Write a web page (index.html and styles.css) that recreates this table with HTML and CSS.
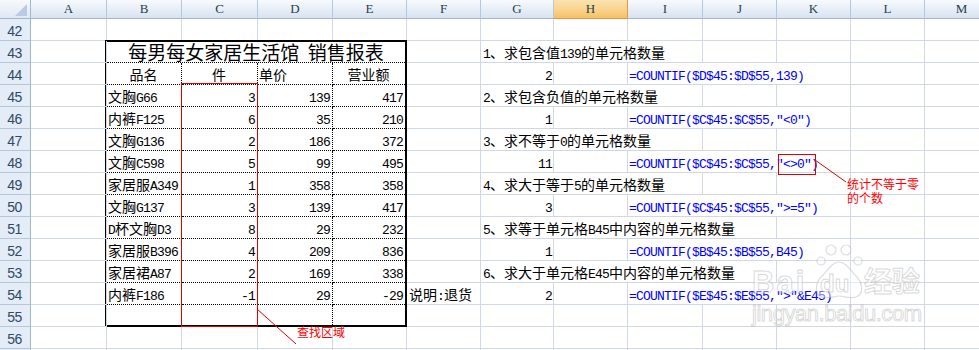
FILE: index.html
```html
<!DOCTYPE html>
<html lang="zh">
<head>
<meta charset="utf-8">
<title>销售报表</title>
<link rel="stylesheet" href="styles.css">
</head>
<body>
<div class="sheet">
  <div class="corner"></div>
  <div class="ch">A</div><div class="ch">B</div><div class="ch">C</div><div class="ch">D</div><div class="ch">E</div><div class="ch">F</div><div class="ch">G</div><div class="ch sel">H</div><div class="ch">I</div><div class="ch">J</div><div class="ch">K</div><div class="ch">L</div><div class="ch">M</div>

  <!-- row 42 -->
  <div class="rh">42</div>
  <div class="c"></div><div class="c"></div><div class="c"></div><div class="c"></div><div class="c"></div><div class="c"></div><div class="c"></div><div class="c"></div><div class="c"></div><div class="c"></div><div class="c"></div><div class="c"></div><div class="c"></div>

  <!-- sales table B43:E55 -->
  <div class="tbl">
    <div class="t title">每男每女家居生活馆&nbsp;&nbsp;销售报表</div>
    <div class="t mid">品名</div><div class="t mid">件</div><div class="t">单价</div><div class="t mid le">营业额</div>
    <div class="t">文胸<span class="l">G66</span></div><div class="t num"><span class="l">3</span></div><div class="t num"><span class="l">139</span></div><div class="t num le"><span class="l">417</span></div>
    <div class="t">内裤<span class="l">F125</span></div><div class="t num"><span class="l">6</span></div><div class="t num"><span class="l">35</span></div><div class="t num le"><span class="l">210</span></div>
    <div class="t">文胸<span class="l">G136</span></div><div class="t num"><span class="l">2</span></div><div class="t num"><span class="l">186</span></div><div class="t num le"><span class="l">372</span></div>
    <div class="t">文胸<span class="l">C598</span></div><div class="t num"><span class="l">5</span></div><div class="t num"><span class="l">99</span></div><div class="t num le"><span class="l">495</span></div>
    <div class="t">家居服<span class="l">A349</span></div><div class="t num"><span class="l">1</span></div><div class="t num"><span class="l">358</span></div><div class="t num le"><span class="l">358</span></div>
    <div class="t">文胸<span class="l">G137</span></div><div class="t num"><span class="l">3</span></div><div class="t num"><span class="l">139</span></div><div class="t num le"><span class="l">417</span></div>
    <div class="t"><span class="l">D</span>杯文胸<span class="l">D3</span></div><div class="t num"><span class="l">8</span></div><div class="t num"><span class="l">29</span></div><div class="t num le"><span class="l">232</span></div>
    <div class="t">家居服<span class="l">B396</span></div><div class="t num"><span class="l">4</span></div><div class="t num"><span class="l">209</span></div><div class="t num le"><span class="l">836</span></div>
    <div class="t">家居裙<span class="l">A87</span></div><div class="t num"><span class="l">2</span></div><div class="t num"><span class="l">169</span></div><div class="t num le"><span class="l">338</span></div>
    <div class="t">内裤<span class="l">F186</span></div><div class="t num"><span class="l">-1</span></div><div class="t num"><span class="l">29</span></div><div class="t num le"><span class="l">-29</span></div>
    <div class="t lr"></div><div class="t lr"></div><div class="t lr"></div><div class="t lr le"></div>
  </div>

  <!-- row 43 -->
  <div class="rh">43</div>
  <div class="c"></div>
  <div class="c"></div>
  <div class="c s3"><span class="l">1</span>、求包含值<span class="l">139</span>的单元格数量</div>
  <div class="c"></div><div class="c"></div><div class="c"></div><div class="c"></div>

  <!-- row 44 -->
  <div class="rh">44</div>
  <div class="c"></div>
  <div class="c"></div>
  <div class="c num"><span class="l">2</span></div>
  <div class="c"></div>
  <div class="c s3 fx"><span class="l">=COUNTIF($D$45:$D$55,139)</span></div>
  <div class="c"></div><div class="c"></div>

  <!-- row 45 -->
  <div class="rh">45</div>
  <div class="c"></div>
  <div class="c"></div>
  <div class="c s3"><span class="l">2</span>、求包含负值的单元格数量</div>
  <div class="c"></div><div class="c"></div><div class="c"></div><div class="c"></div>

  <!-- row 46 -->
  <div class="rh">46</div>
  <div class="c"></div>
  <div class="c"></div>
  <div class="c num"><span class="l">1</span></div>
  <div class="c"></div>
  <div class="c s3 fx"><span class="l">=COUNTIF($C$45:$C$55,&quot;&lt;0&quot;)</span></div>
  <div class="c"></div><div class="c"></div>

  <!-- row 47 -->
  <div class="rh">47</div>
  <div class="c"></div>
  <div class="c"></div>
  <div class="c s3"><span class="l">3</span>、求不等于<span class="l">0</span>的单元格数量</div>
  <div class="c"></div><div class="c"></div><div class="c"></div><div class="c"></div>

  <!-- row 48 -->
  <div class="rh">48</div>
  <div class="c"></div>
  <div class="c"></div>
  <div class="c num"><span class="l">11</span></div>
  <div class="c"></div>
  <div class="c s3 fx"><span class="l">=COUNTIF($C$45:$C$55,&quot;&lt;&gt;0&quot;)</span></div>
  <div class="c"></div><div class="c"></div>

  <!-- row 49 -->
  <div class="rh">49</div>
  <div class="c"></div>
  <div class="c"></div>
  <div class="c s3"><span class="l">4</span>、求大于等于<span class="l">5</span>的单元格数量</div>
  <div class="c"></div><div class="c"></div><div class="c"></div><div class="c"></div>

  <!-- row 50 -->
  <div class="rh">50</div>
  <div class="c"></div>
  <div class="c"></div>
  <div class="c num"><span class="l">3</span></div>
  <div class="c"></div>
  <div class="c s3 fx"><span class="l">=COUNTIF($C$45:$C$55,&quot;&gt;=5&quot;)</span></div>
  <div class="c"></div><div class="c"></div>

  <!-- row 51 -->
  <div class="rh">51</div>
  <div class="c"></div>
  <div class="c"></div>
  <div class="c s4"><span class="l">5</span>、求等于单元格<span class="l">B45</span>中内容的单元格数量</div>
  <div class="c"></div><div class="c"></div><div class="c"></div>

  <!-- row 52 -->
  <div class="rh">52</div>
  <div class="c"></div>
  <div class="c"></div>
  <div class="c num"><span class="l">1</span></div>
  <div class="c"></div>
  <div class="c s3 fx"><span class="l">=COUNTIF($B$45:$B$55,B45)</span></div>
  <div class="c"></div><div class="c"></div>

  <!-- row 53 -->
  <div class="rh">53</div>
  <div class="c"></div>
  <div class="c"></div>
  <div class="c s4"><span class="l">6</span>、求大于单元格<span class="l">E45</span>中内容的单元格数量</div>
  <div class="c"></div><div class="c"></div><div class="c"></div>

  <!-- row 54 -->
  <div class="rh">54</div>
  <div class="c"></div>
  <div class="c">说明<span class="l">:</span>退货</div>
  <div class="c num"><span class="l">2</span></div>
  <div class="c"></div>
  <div class="c s3 fx"><span class="l">=COUNTIF($E$45:$E$55,&quot;&gt;&quot;&amp;E45)</span></div>
  <div class="c"></div><div class="c"></div>

  <!-- row 55 -->
  <div class="rh">55</div>
  <div class="c"></div>
  <div class="c"></div><div class="c"></div><div class="c"></div><div class="c"></div><div class="c"></div><div class="c"></div><div class="c"></div><div class="c"></div>

  <!-- row 56 -->
  <div class="rh">56</div>
  <div class="c"></div><div class="c"></div><div class="c"></div><div class="c"></div><div class="c"></div><div class="c"></div><div class="c"></div><div class="c"></div><div class="c"></div><div class="c"></div><div class="c"></div><div class="c"></div><div class="c"></div>

  <!-- row 57 (only its top edge is in view) -->
  <div class="rh"></div>
  <div class="c"></div><div class="c"></div><div class="c"></div><div class="c"></div><div class="c"></div><div class="c"></div><div class="c"></div><div class="c"></div><div class="c"></div><div class="c"></div><div class="c"></div><div class="c"></div><div class="c"></div>

  <!-- drawn annotations over the sheet -->
  <svg class="overlay" width="979" height="350" viewBox="0 0 979 350">
    <rect class="redbox" x="181.5" y="83.5" width="76" height="243"/>
    <line class="redline" x1="257" y1="309" x2="296" y2="344"/>
    <rect class="redbox" x="778.5" y="154.5" width="37" height="20"/>
    <line class="redline" x1="815" y1="160" x2="846" y2="182"/>
    <g class="wm">
      <circle cx="821" cy="261" r="4"/>
      <circle cx="831" cy="250" r="5"/>
      <circle cx="846" cy="250" r="5"/>
      <circle cx="858" cy="261" r="4"/>
      <path d="M839 262 C832 262 828 270 822 276 C816 282 814 292 820 296 C826 300 834 296 839 296 C844 296 852 300 858 296 C864 292 862 282 856 276 C850 270 846 262 839 262 Z"/>
      <text class="wm-en" x="752" y="293">Bai</text>
      <text class="wm-du" x="820" y="292">du</text>
      <text class="wm-cn" x="864" y="292">经验</text>
      <text class="wm-url" x="752" y="321" textLength="170">jingyan.baidu.com</text>
    </g>
  </svg>
  <div class="note note-a">查找区域</div>
  <div class="note note-b">统计不等于零<br>的个数</div>
</div>
</body>
</html>
```
FILE: styles.css
```css
html, body {
  margin: 0;
  padding: 0;
  background: #fff;
  overflow: hidden;
}

.sheet {
  position: relative;
  width: 979px;
  height: 350px;
  overflow: hidden;
  display: grid;
  grid-template-columns: 31px 76px 75px 76px 75px 74px 74px 73px 74px 75px 74px 74px 74px 74px;
  grid-template-rows: 19px repeat(16, 22px);
  font-family: "Noto Sans CJK SC", sans-serif;
  font-size: 14px;
  color: #000;
}

/* headers */
.corner {
  background: linear-gradient(#f6f9fd, #dfe8f4);
  border-right: 1px solid #9eb6ce;
  border-bottom: 1px solid #9eb6ce;
  box-sizing: border-box;
  display: flex;
  justify-content: flex-end;
  align-items: flex-end;
  padding: 0 3px 2px 0;
}
.corner::after {
  content: "";
  width: 0;
  height: 0;
  border-left: 12px solid transparent;
  border-bottom: 12px solid #b9cbe0;
}

.ch {
  background: linear-gradient(#f8fafd 0%, #e6edf7 55%, #d8e3f0 100%);
  border-right: 1px solid #b5c7db;
  border-bottom: 1px solid #9eb6ce;
  box-sizing: border-box;
  display: flex;
  justify-content: center;
  align-items: flex-end;
  padding-bottom: 2px;
  font-family: "Liberation Serif", serif;
  font-size: 13px;
  line-height: 14px;
  color: #27404a;
}
.ch.sel {
  background: linear-gradient(#fbe2b0 0%, #f8d38e 55%, #f3c164 100%);
  border-right-color: #f29536;
  border-bottom-color: #f29536;
}

.rh {
  background: #e4ecf7;
  border-right: 1px solid #9eb6ce;
  border-bottom: 1px solid #b5c7db;
  box-sizing: border-box;
  display: flex;
  justify-content: center;
  align-items: flex-end;
  padding: 0 1px 2px 0;
  font-family: "Liberation Sans", sans-serif;
  font-size: 14px;
  letter-spacing: -0.5px;
  line-height: 14px;
  color: #2f4a66;
}

/* cells: text sits at the bottom of the cell, as in a spreadsheet */
.c {
  border-right: 1px solid #d0d7e5;
  border-bottom: 1px solid #d0d7e5;
  box-sizing: border-box;
  padding: 3px 2px 0 2px;
  line-height: 16px;
  white-space: nowrap;
  overflow: hidden;
  min-width: 0;
}
.c.num { text-align: right; padding-right: 1px; }
.c.fx { color: #0000ff; padding-left: 1px; }
.s3 { grid-column: span 3; }
.s4 { grid-column: span 4; }

.l {
  font-family: "Liberation Mono", monospace;
  font-size: 13px;
  letter-spacing: -0.8px;
}

/* sales table */
.tbl {
  grid-row: 3 / 16;
  grid-column: 3 / 7;
  margin: -1px 0 0 -2px;
  border: 2px solid #000;
  box-sizing: border-box;
  background: #fff;
  display: grid;
  grid-template-columns: 75px 76px 75px 72px;
  grid-template-rows: 21px repeat(11, 22px) 20px;
}
.t {
  border-right: 1px dotted #000;
  border-bottom: 1px dotted #000;
  box-sizing: border-box;
  padding: 3px 2px 0 1px;
  line-height: 16px;
  white-space: nowrap;
  overflow: hidden;
  min-width: 0;
}
.t.title {
  grid-column: 1 / -1;
  border-right: none;
  text-align: center;
  font-size: 19px;
  line-height: 20px;
  padding: 0;
  overflow: visible;
}
.t.mid { text-align: center; }
.t.num { text-align: right; }
.t.le { border-right: none; }
.t.lr { border-bottom: none; }

/* annotations */
.overlay {
  position: absolute;
  left: 0;
  top: 0;
  pointer-events: none;
}
.redbox {
  fill: none;
  stroke: #e00000;
  stroke-width: 1;
  shape-rendering: crispEdges;
}
.redline {
  stroke: #e00000;
  stroke-width: 1;
}
.wm circle, .wm path {
  fill: rgba(255, 255, 255, 0.45);
  stroke: rgba(170, 170, 170, 0.4);
  stroke-width: 1.2;
}
.wm text {
  fill: rgba(255, 255, 255, 0.45);
  stroke: rgba(170, 170, 170, 0.45);
  stroke-width: 1;
}
.wm-en {
  font-family: "Liberation Sans", sans-serif;
  font-weight: bold;
  font-size: 31px;
  letter-spacing: 2px;
}
.wm-du {
  font-family: "Liberation Sans", sans-serif;
  font-weight: bold;
  font-size: 24px;
}
.wm-cn {
  font-family: "Noto Sans CJK SC", sans-serif;
  font-weight: bold;
  font-size: 28px;
}
.wm-url {
  font-family: "Liberation Sans", sans-serif;
  font-size: 22px;
}

.note {
  position: absolute;
  color: #ff0000;
  font-family: "Noto Sans CJK SC", sans-serif;
  font-size: 12px;
  line-height: 14px;
  white-space: nowrap;
}
.note-a { left: 297px; top: 325px; }
.note-b { left: 847px; top: 177px; }
```
